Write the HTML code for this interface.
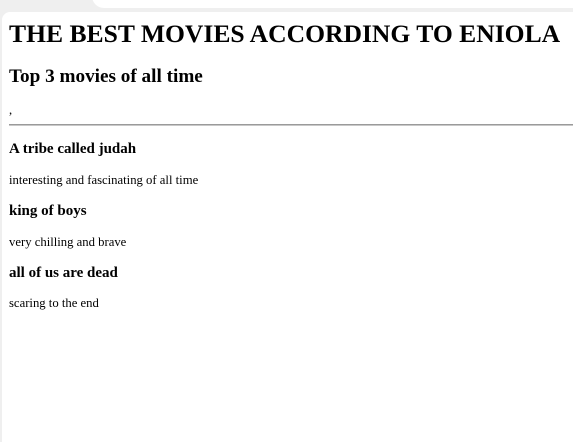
<!DOCTYPE html>
<html><head><style>
html,body{margin:0;padding:0;width:573px;height:428px;overflow:hidden;background:#efefef;font-family:"Liberation Serif",serif;color:#000}
.tab{position:absolute;left:92px;top:-10px;width:500px;height:18px;background:#fff;border-radius:0 0 0 12px}
.page{position:absolute;left:2px;top:12px;width:580px;height:430px;background:#fff;border-radius:8px 0 0 0}
.t{position:absolute;left:9px;line-height:1;white-space:nowrap;font-weight:bold}
.p{position:absolute;left:9px;line-height:1;white-space:nowrap;font-size:12.7px}
hr{position:absolute;left:9px;top:124px;width:570px;margin:0;border:0;border-top:1px solid #9a9a9a;border-bottom:1px solid #c8c8c8}
</style></head><body>
<div class="tab"></div>
<div class="page"></div>
<div class="t" style="top:21px;font-size:25.6px">THE BEST MOVIES ACCORDING TO ENIOLA</div>
<div class="t" style="top:67px;font-size:19.2px">Top 3 movies of all time</div>
<div class="p" style="top:104px">,</div>
<hr>
<div class="t" style="top:142px;font-size:15px">A tribe called judah</div>
<div class="p" style="top:174px">interesting and fascinating of all time</div>
<div class="t" style="top:204px;font-size:15px">king of boys</div>
<div class="p" style="top:236px">very chilling and brave</div>
<div class="t" style="top:266px;font-size:15px">all of us are dead</div>
<div class="p" style="top:297px">scaring to the end</div>
</body></html>
